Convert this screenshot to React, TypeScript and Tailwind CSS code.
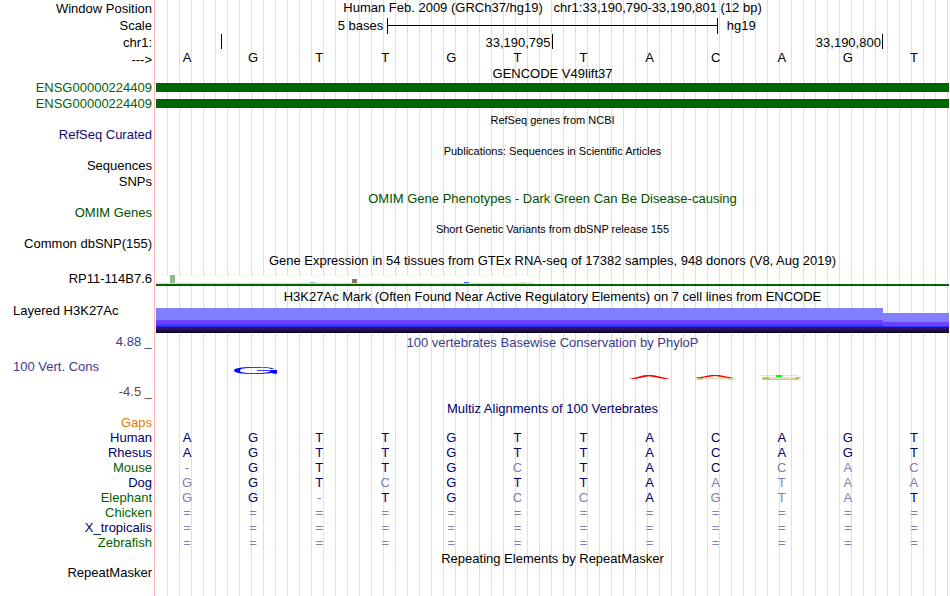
import React from "react";

type RowProps = {
  label?: string;
  labelClass?: string;
  className?: string;
  children?: React.ReactNode;
};

// one line of the browser: side label on the left, track data on the right
const Row = ({ label, labelClass = "text-right pb-[2px]", className = "h-4", children }: RowProps) => (
  <div className={`flex items-center pr-px ${className}`}>
    <div className={`w-39 shrink-0 pr-1 whitespace-nowrap ${labelClass}`}>{label}</div>
    <div className="flex-1 min-w-0 self-stretch">{children}</div>
  </div>
);

type TitleProps = {
  className?: string;
  textClass?: string;
  children: React.ReactNode;
};

const Title = ({ className = "h-4", textClass = "", children }: TitleProps) => (
  <div className={`flex items-center pr-px ${className}`}>
    <div className="w-39 shrink-0" />
    <h2 className={`flex-1 text-center whitespace-pre ${textClass}`}>{children}</h2>
  </div>
);

const bases = "AGTTGTTACAGT".split("");

// lower case = differs from human, drawn lighter
const species = [
  { name: "Human", color: "text-[#000064]", seq: "AGTTGTTACAGT" },
  { name: "Rhesus", color: "text-[#000064]", seq: "AGTTGTTACAGT" },
  { name: "Mouse", color: "text-[#006400]", seq: "-GTTGcTACcac" },
  { name: "Dog", color: "text-[#000064]", seq: "gGTcGTTAataa" },
  { name: "Elephant", color: "text-[#006400]", seq: "gG-TGccAgtaT" },
  { name: "Chicken", color: "text-[#006400]", seq: "============" },
  { name: "X_tropicalis", color: "text-[#000064]", seq: "============" },
  { name: "Zebrafish", color: "text-[#006400]", seq: "============" },
];

const GeneBar = () => (
  <Row label="ENSG00000224409" labelClass="text-right pb-[2px] text-[#006400]">
    <div className="h-full pt-[3px] pb-1">
      <div className="h-full bg-[#006400]" />
    </div>
  </Row>
);

const Expression = () => (
  <div className="h-full flex flex-col justify-end">
    <svg width="378" height="9" shapeRendering="crispEdges">
      <rect width="378" height="9" fill="#f2f2ef" />
      <rect x="1" y="1" width="376" height="6" fill="#fff" />
      <rect y="8" width="378" height="1" fill="#dcdcdc" />
      <rect x="14" y="0" width="5" height="8" fill="#8fbc8f" />
      <rect x="154" y="7" width="5" height="1" fill="#8fb9c6" />
      <rect x="196" y="4" width="5" height="4" fill="#8b7355" />
      <rect x="308" y="7" width="5" height="1" fill="#3a5fcd" />
      <rect x="364" y="7" width="5" height="1" fill="#eed5d2" />
    </svg>
    <div className="h-[2px] bg-[#006400]" />
  </div>
);

const Layered = () => (
  <div className="h-full grid grid-cols-12 items-end">
    <div className="col-span-11">
      <div className="h-3 bg-[#8080ff]" />
      <div className="h-1 bg-[#7040ff]" />
      <div className="h-[2px] bg-[#4038ff]" />
      <div className="h-px bg-[#3028e0]" />
      <div className="h-[3px] bg-[#301066]" />
      <div className="h-[2px] bg-[#180c50]" />
      <div className="h-px bg-[#100818]" />
    </div>
    <div>
      <div className="h-[9px] bg-[#8080ff]" />
      <div className="h-1 bg-[#7040ff]" />
      <div className="h-px bg-[#3430ff]" />
      <div className="h-[3px] bg-[#301066]" />
      <div className="h-[2px] bg-[#180c50]" />
      <div className="h-px bg-[#100818]" />
    </div>
  </div>
);

// squashed base logos of the conservation track
const LogoG = () => (
  <svg width="66" height="34">
    <path
      d="M53 18.6C48 17.2 40 17 33 17C18 17 12 18.4 12 20.5C12 22.6 18 24 33 24C41 24 47 23.5 50 22.8L51 23.8H55V20H35V20.8H49C48 22.3 42 23.2 33 23.2C22 23.2 18 22.3 18 20.5C18 18.7 22 17.8 33 17.8C41 17.8 47 18.1 49 18.9Z"
      fill="#0000ff"
    />
  </svg>
);

const LogoA = () => (
  <svg width="66" height="34">
    <path d="M10 29L26 25H34L51 29H45L30 26.2L16 29Z" fill="#ff0000" />
  </svg>
);

const LogoAC = () => (
  <svg width="66" height="34">
    <path d="M12 28.5H46" stroke="#e6e2b8" strokeWidth="2" />
    <path d="M11 27.5H18V29.5H12ZM44 28.5H51L48 29.5H42Z" fill="#c4bc60" />
    <path d="M10 28L26 25H34L49 28H43L30 26L16 28Z" fill="#ff0000" />
  </svg>
);

const LogoTC = () => (
  <svg width="66" height="34">
    <rect x="9" y="25" width="38" height="1" fill="#c8f5c8" />
    <path d="M12 28H48" stroke="#e6e2b8" strokeWidth="2" />
    <path d="M11 27.5L14 27H18V29H12ZM45 27H48L51 28L47 29H44Z" fill="#c4bc60" />
    <path d="M11 29.5H48" stroke="#f5a9a0" strokeWidth="1" />
    <rect x="25" y="25" width="6" height="2" fill="#00ff00" />
  </svg>
);

const Alignment = () => (
  <table className="w-full table-fixed border-collapse">
    <colgroup>
      <col className="w-39" />
      {bases.map((_, i) => (
        <col key={i} />
      ))}
      <col className="w-px" />
    </colgroup>
    <tbody>
      {species.map((s) => (
        <tr key={s.name} className="h-[15px]">
          <th scope="row" className={`p-0 pr-1 text-right font-normal ${s.color}`}>
            {s.name}
          </th>
          {s.seq.split("").map((b, i) => (
            <td
              key={i}
              className={`p-0 pr-1 text-center ${/[A-Z]/.test(b) ? "text-[#000064]" : "text-[#8080b2]"}`}
            >
              {b.toUpperCase()}
            </td>
          ))}
          <td className="p-0" />
        </tr>
      ))}
    </tbody>
  </table>
);

const App = () => {
  return (
    <main className="min-h-screen text-[13px] leading-[15px] text-black font-['Liberation_Sans',Arial,sans-serif] bg-[linear-gradient(90deg,#fff_154px,#ffb4b4_154px,#ffb4b4_155px,#fff_155px,#fff_156px,transparent_156px),repeating-linear-gradient(90deg,#fff_0px,#fff_11px,#dcdcf5_11px,#dcdcf5_12px)]">
      <Row label="Window Position" labelClass="text-right" className="h-[17px]">
        <h1 className="text-center whitespace-pre">
          {"Human Feb. 2009 (GRCh37/hg19)\u00a0\u00a0 chr1:33,190,790-33,190,801 (12 bp)"}
        </h1>
      </Row>

      <Row label="Scale" labelClass="text-right" className="h-[17px]">
        <div className="h-full grid grid-cols-24 items-center">
          <span className="col-span-7 text-right pr-1">5 bases</span>
          <div className="col-span-10 h-4 border-x border-black flex items-center">
            <div className="h-px w-full bg-black" />
          </div>
          <span className="col-span-7 pl-[9px]">hg19</span>
        </div>
      </Row>

      <Row label="chr1:" labelClass="text-right" className="h-4">
        <div className="grid grid-cols-12 text-right leading-[17px]">
          <div className="h-[15px] border-r border-black" />
          <div className="col-span-5 h-[15px] border-r border-black pr-px">33,190,795</div>
          <div className="col-span-5 h-[15px] border-r border-black pr-px">33,190,800</div>
        </div>
      </Row>

      <Row label="--->" labelClass="text-right pt-[2px]" className="h-4">
        <div className="grid grid-cols-12 text-center">
          {bases.map((b, i) => (
            <span key={i} className="pr-1">{b}</span>
          ))}
        </div>
      </Row>

      <Title className="h-[14px]">GENCODE V49lift37</Title>
      <GeneBar />
      <GeneBar />

      <Title className="h-[15px] pt-px" textClass="text-[11px]">RefSeq genes from NCBI</Title>
      <Row label="RefSeq Curated" labelClass="text-right pb-[2px] text-[#0c0c78]" />

      <Title textClass="text-[11px]">Publications: Sequences in Scientific Articles</Title>
      <Row label="Sequences" className="h-[15px]" />
      <Row label="SNPs" />

      <Title textClass="text-[#005000]">OMIM Gene Phenotypes - Dark Green Can Be Disease-causing</Title>
      <Row label="OMIM Genes" labelClass="text-right pb-[2px] text-[#005000]" className="h-[15px]" />

      <Title textClass="text-[11px]">Short Genetic Variants from dbSNP release 155</Title>
      <Row label="Common dbSNP(155)" className="h-[15px]" />

      <Title className="h-[18px] pb-[2px]">
        Gene Expression in 54 tissues from GTEx RNA-seq of 17382 samples, 948 donors (V8, Aug 2019)
      </Title>
      <Row label="RP11-114B7.6" labelClass="text-right">
        <Expression />
      </Row>

      <Title className="h-[22px] pb-[2px]">
        H3K27Ac Mark (Often Found Near Active Regulatory Elements) on 7 cell lines from ENCODE
      </Title>
      <div className="flex pr-px h-[25px]">
        <div className="w-39 shrink-0 pl-[13px] leading-[5px]">Layered H3K27Ac</div>
        <div className="flex-1">
          <Layered />
        </div>
      </div>

      <Row label="4.88 _" labelClass="text-right text-[#3c3c8c]" className="h-[17px]">
        <h2 className="text-center text-[#3c3c8c] pt-[2px]">100 vertebrates Basewise Conservation by PhyloP</h2>
      </Row>
      <Row label="100 Vert. Cons" labelClass="pl-[13px] pb-[2px] text-[#3c3c8c]" className="h-[34px]">
        <div className="grid grid-cols-12">
          <div className="col-start-2"><LogoG /></div>
          <div className="col-start-8"><LogoA /></div>
          <div><LogoAC /></div>
          <div><LogoTC /></div>
        </div>
      </Row>
      <Row label="-4.5 _" labelClass="text-right pb-[2px] text-[#783c3c]" />

      <Title textClass="text-[#000064]">Multiz Alignments of 100 Vertebrates</Title>
      <Row label="Gaps" labelClass="text-right pb-[2px] text-[#e08000]" className="h-[14px]" />
      <Alignment />

      <Title>Repeating Elements by RepeatMasker</Title>
      <Row label="RepeatMasker" className="h-[14px]" />
    </main>
  );
};

export default App;
